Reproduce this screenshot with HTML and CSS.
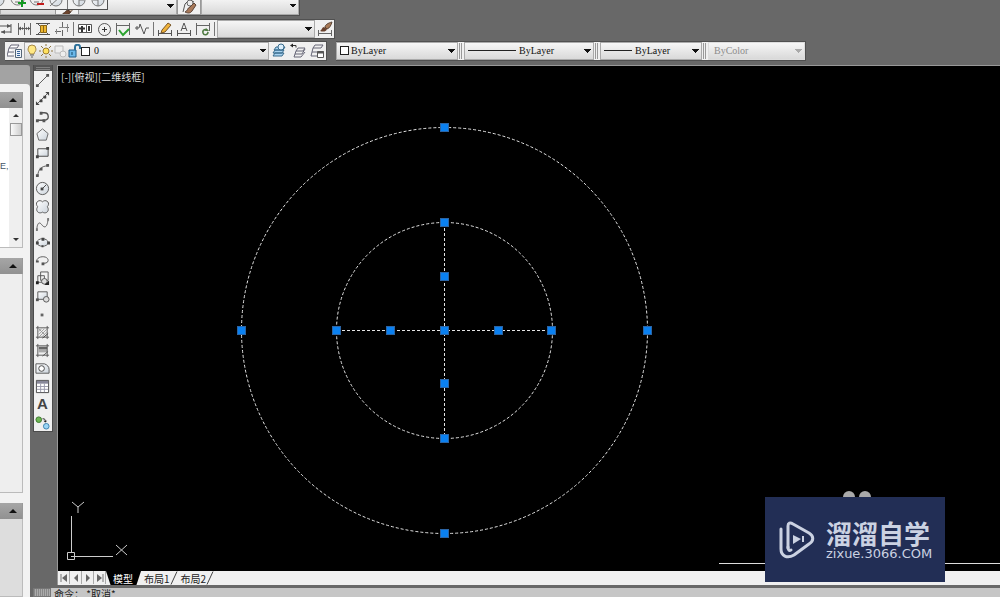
FILE: index.html
```html
<!DOCTYPE html>
<html lang="zh-CN">
<head>
<meta charset="utf-8">
<title>CAD</title>
<link rel="stylesheet" href="styles.css">
</head>
<body>
<svg class="defs" aria-hidden="true">
  <defs>
    <linearGradient id="fill" x1="0" y1="0" x2="1" y2="1"><stop offset="0" stop-color="#fff"/><stop offset="1" stop-color="#ccd4dc"/></linearGradient>
    <symbol id="brush" viewBox="0 0 16 16"><path d="M15 1C11 2 9 4 8 7l3 2c3-2 4-5 4-8z" fill="#d8c0a8" stroke="#5a4538"/><path d="M8 7c-3 0-3 3-6 4 3 2 7 2 9-2z" fill="#6b432c" stroke="#452e22"/></symbol>
  </defs>
</svg>

<header class="bars">
  <div class="bar bar-styles">
    <select class="combo styles-a" aria-label="文字样式"><option></option></select>
    <button class="tool" aria-label="标注样式"><svg viewBox="0 0 16 16"><path d="M2 14L4 6l4-4 5 2" fill="none" stroke="#555"/><circle cx="9" cy="5" r="3" fill="#eee" stroke="#666"/><path d="M13 5l2 2-4 6c-2 3-5 2-7 1 3-1 2-4 5-5z" fill="#a8795a" stroke="#5a4438"/></svg></button>
    <select class="combo styles-b" aria-label="标注样式列表"><option></option></select>
  </div>
  <div class="float-bar">
    <span class="brush-peek"><svg viewBox="0 0 16 16"><use href="#brush"/></svg></span>
    <div class="float-strip">
      <button class="tool" aria-label="视图"><svg viewBox="0 0 16 16"><circle cx="7" cy="8" r="6" fill="url(#fill)" stroke="#777"/></svg></button>
      <button class="tool" aria-label="并集"><svg viewBox="0 0 16 16"><path d="M1 6c0 9 12 9 13 2M5 10h5" fill="none" stroke="#777"/><path d="M12 8v7M8 11h8" stroke="#139a22" stroke-width="2"/></svg></button>
      <button class="tool" aria-label="差集"><svg viewBox="0 0 16 16"><path d="M1 6c0 9 12 9 13 2M5 10h5" fill="none" stroke="#777"/><path d="M8 12h7" stroke="#c21c1c" stroke-width="2"/></svg></button>
      <button class="tool" aria-label="交集"><svg viewBox="0 0 16 16"><circle cx="8" cy="8" r="6" fill="url(#fill)" stroke="#777"/><path d="M2 14L14 3" stroke="#777"/></svg></button>
      <span class="sep"></span>
      <button class="tool" aria-label="拉伸面"><svg viewBox="0 0 16 16"><circle cx="8" cy="8" r="6" fill="url(#fill)" stroke="#777"/><path d="M8 2v12M8 8h5" fill="none" stroke="#777"/></svg></button>
      <button class="tool" aria-label="移动面"><svg viewBox="0 0 16 16"><circle cx="8" cy="8" r="6" fill="url(#fill)" stroke="#777"/><path d="M8 2v12M3 8h5" fill="none" stroke="#777"/></svg></button>
    </div>
  </div>

  <div class="bar bar-dim">
    <button class="tool" aria-label="基线"><svg viewBox="0 0 16 16"><path d="M0 5h14M14 3v9M4 11h10" fill="none" stroke="#555"/><path d="M10 3l4 2-4 2M8 9l-4 2 4 2" fill="#555"/></svg></button>
    <button class="tool" aria-label="连续"><svg viewBox="0 0 16 16"><path d="M2.500 2v12M8.500 2v12M14.500 2v12M2 7.500h12" stroke="#666"/><path d="M2 7.500l3-2v4zM8 7.500L6 6v3zM9 7.500L11 6v3zM14 7.500l-2-2v4z" fill="#555"/></svg></button>
    <button class="tool" aria-label="标注间距"><svg viewBox="0 0 16 16"><path d="M1 2.500h14M1 13.500h14M2 2l3 3M14 2l-3 3M2 14l3-3M14 14l-3-3" stroke="#555"/><path d="M5.500 4.500h6v7h-6z" fill="#efb72e" stroke="#8b6818"/><path d="M8.500 5v6" stroke="#8b6818"/></svg></button>
    <button class="tool" aria-label="标注打断"><svg viewBox="0 0 16 16"><path d="M8.500 1v6M8.500 9v6M1 10.500h6M10 6.500h5" stroke="#666"/><path d="M13.500 3v8M2.500 8v5M5 6.500h7" stroke="#888"/></svg></button>
    <span class="sep"></span>
    <button class="tool" aria-label="公差"><svg viewBox="0 0 16 16"><path d="M1.500 3.500h13v8h-13zM9.500 4v8" fill="#fff" stroke="#555"/><path d="M2 7.500h6M5 5v6M12 5v5" stroke="#333" stroke-width="2"/></svg></button>
    <button class="tool" aria-label="圆心标记"><svg viewBox="0 0 16 16"><circle cx="8.500" cy="8.500" r="6" fill="none" stroke="#555"/><path d="M8.500 6v5M6 8.500h5" stroke="#333"/></svg></button>
    <button class="tool" aria-label="检验"><svg viewBox="0 0 16 16"><path d="M1.500 2v12M14.500 2v12M2 4.500h12" stroke="#666"/><path d="M4 9l4 5 6-6" fill="none" stroke="#2aa32f" stroke-width="2"/></svg></button>
    <button class="tool" aria-label="折弯线性"><svg viewBox="0 0 16 16"><path d="M1 7h4l1-4 4 10 2-6h3M3 5v4" fill="none" stroke="#555"/></svg></button>
    <span class="sep"></span>
    <button class="tool" aria-label="编辑标注"><svg viewBox="0 0 16 16"><path d="M1.500 9v6M14.500 9v6M2 12.500h12" stroke="#555"/><path d="M5 9l6-7 3 2-6 7-4 1z" fill="#efb23a" stroke="#775427"/></svg></button>
    <button class="tool" aria-label="编辑标注文字"><svg viewBox="0 0 16 16"><path d="M1.500 9v6M14.500 9v6M2 12.500h12M5 10l3-8 3 8M6 7.500h4" fill="none" stroke="#555"/></svg></button>
    <button class="tool" aria-label="标注更新"><svg viewBox="0 0 16 16"><path d="M1.500 2v12M14.500 2v8M2 4.500h12" stroke="#666"/><path d="M13 10c-2-3-6-1-5 2 1 3 5 2 5-1" fill="none" stroke="#4f7b42" stroke-width="1.500"/><path d="M11 7l3 3h-4z" fill="#4f7b42"/></svg></button>
    <span class="sep"></span>
    <select class="combo dim-style" aria-label="标注样式控制"><option></option></select>
    <button class="tool" aria-label="标注样式"><svg viewBox="0 0 16 16"><path d="M1.500 9v6M14.500 9v6M2 12.500h12" stroke="#666"/><path d="M15 1C11 2 8 4 8 6l2 2c3-1 4-4 5-7z" fill="#a87955" stroke="#5a4538"/><path d="M7 6c-2 0-2 3-4 4 3 1 6 1 7-2z" fill="#68402b"/></svg></button>
  </div>

  <div class="bar-row">
    <div class="bar bar-layer">
      <button class="tool" aria-label="图层特性"><svg viewBox="0 0 16 16"><path d="M2 5l2-3h8l-2 3zM2 5l-1 4h6M1 9l-1 4h7" fill="#fff" stroke="#667"/><path d="M8.500 6.500h6v8h-6z" fill="#edf3fa" stroke="#567"/><path d="M10 8.500h3M10 10.500h3M10 12.500h3" stroke="#37649b"/></svg></button>
      <div class="layer-box">
        <span class="layer-state" aria-hidden="true">
          <svg viewBox="0 0 14 14"><path d="M5 10C5 8 3 8 3 5a4 4 0 0 1 8 0c0 3-2 3-2 5z" fill="#ffe884" stroke="#a68a48"/><path d="M5 11h4M6 13h2" stroke="#666"/></svg>
          <svg viewBox="0 0 14 14"><circle cx="7" cy="7" r="3" fill="#ffe15e" stroke="#9b7b2d"/><path d="M7 0v2M7 12v2M0 7h2M12 7h2M2 2l2 2M10 10l2 2M2 12l2-2M10 4l2-2" stroke="#8f7740"/></svg>
          <svg viewBox="0 0 14 14"><path d="M2 2h8v7H2z" fill="#eee" stroke="#bbb"/><circle cx="10" cy="10" r="3" fill="#eee" stroke="#bbb"/></svg>
          <svg viewBox="0 0 14 14"><path d="M2 6h7v7H2z" fill="#6bb8ea" stroke="#225c87"/><path d="M8 6V3c0-3 5-3 5 0v2" fill="none" stroke="#2d7099" stroke-width="2"/><path d="M5 8v3" stroke="#174866"/></svg>
          <i class="swatch"></i>
        </span>
        <select class="combo layer" aria-label="图层"><option>0</option></select>
      </div>
      <button class="tool" aria-label="置为当前"><svg viewBox="0 0 16 16"><path d="M2 13l2-3h9l-2 3zM2 10l2-3h9l-2 3zM3 7l2-3h9l-2 3z" fill="#a9d3f0" stroke="#386a8b"/><circle cx="10" cy="4" r="3" fill="#dceffc" stroke="#386a8b"/></svg></button>
      <button class="tool" aria-label="上一个图层"><svg viewBox="0 0 16 16"><path d="M6 8l2-3h7l-2 3zM6 8l-1 3h7l3-5M5 11l-1 3h7l4-5" fill="none" stroke="#667"/><path d="M2 2.500h4v2" fill="none" stroke="#333"/><path d="M0 2.500l3-2v4z" fill="#222"/></svg></button>
      <button class="tool" aria-label="图层状态"><svg viewBox="0 0 16 16"><path d="M4 5l2-3h8l-2 3zM4 5L3 9h5M3 9l-1 4h6" fill="none" stroke="#667"/><path d="M8.500 8.500h6v6h-6z" fill="#fff" stroke="#555"/><path d="M8 9.500h7" stroke="#555" stroke-width="2"/></svg></button>
    </div>
    <div class="bar bar-props">
      <div class="prop prop-color"><i class="swatch" aria-hidden="true"></i><select class="combo" aria-label="颜色"><option>ByLayer</option></select></div>
      <span class="grip"></span>
      <div class="prop prop-type"><i class="rule rule-long" aria-hidden="true"></i><select class="combo" aria-label="线型"><option>ByLayer</option></select></div>
      <span class="grip"></span>
      <div class="prop prop-weight"><i class="rule" aria-hidden="true"></i><select class="combo" aria-label="线宽"><option>ByLayer</option></select></div>
      <span class="grip"></span>
      <div class="prop prop-plot"><select class="combo" aria-label="打印样式" disabled><option>ByColor</option></select></div>
    </div>
  </div>
</header>

<div class="main">
  <aside class="palette">
    <div class="palette-cap"></div>
    <div class="palette-body">
      <button class="section-head" aria-label="折叠"></button>
      <div class="section section-list">
        <p class="list-text">E,</p>
        <div class="scroll"><button class="scroll-up" aria-label="向上"></button><i class="thumb"></i><button class="scroll-down" aria-label="向下"></button></div>
      </div>
      <button class="section-head" aria-label="折叠"></button>
      <div class="section section-mid"></div>
      <button class="section-head" aria-label="折叠"></button>
      <div class="section section-end"></div>
    </div>
  </aside>

  <div class="work">
    <div class="stage">
      <nav class="draw-bar" aria-label="绘图">
        <span class="draw-grip"></span>
        <button aria-label="直线"><svg viewBox="0 0 16 16"><path d="M3 13L13 3" stroke="#555"/><path d="M1 12h3v3H1zM12 1h3v3h-3z" fill="#555"/></svg></button>
        <button aria-label="构造线"><svg viewBox="0 0 16 16"><path d="M2 14L14 2" stroke="#555"/><path d="M1 15v-4l4 4zM15 1v4l-4-4zM5 9h3v3H5zM9 5h3v3H9z" fill="#444"/></svg></button>
        <button aria-label="多段线"><svg viewBox="0 0 16 16"><path d="M3 12h7c6 0 5-8 0-8H7" fill="none" stroke="#555" stroke-width="1.500"/><path d="M1 11h3v3H1zM8 11h3v3H8zM5 3h3v3H5z" fill="#555"/></svg></button>
        <button aria-label="多边形"><svg viewBox="0 0 16 16"><path d="M8 2l6 5-2 7H4L2 7z" fill="url(#fill)" stroke="#666"/></svg></button>
        <button aria-label="矩形"><svg viewBox="0 0 16 16"><path d="M3 4h11v8H3z" fill="url(#fill)" stroke="#444"/><path d="M1 11h3v3H1zM12 2h3v3h-3z" fill="#444"/></svg></button>
        <button aria-label="圆弧"><svg viewBox="0 0 16 16"><path d="M3 14C3 7 7 3 14 3" fill="none" stroke="#555"/><path d="M1 12h3v3H1zM5 5h3v3H5zM12 1h3v3h-3z" fill="#555"/></svg></button>
        <button aria-label="圆"><svg viewBox="0 0 16 16"><circle cx="8" cy="8" r="6.500" fill="url(#fill)" stroke="#555"/><path d="M8 8l4-4" stroke="#444"/><path d="M6 7h3v3H6z" fill="#444"/></svg></button>
        <button aria-label="修订云线"><svg viewBox="0 0 16 16"><path d="M8 3c3-3 8 0 6 4-1 1-1 1 0 3 1 4-3 6-6 4-3 2-7 0-6-4 1-2 1-2 0-3C0 3 5 0 8 3z" fill="url(#fill)" stroke="#555"/></svg></button>
        <button aria-label="样条曲线"><svg viewBox="0 0 16 16"><path d="M2 14C2 8 4 4 7 8s6 4 7-6" fill="none" stroke="#555"/><path d="M1 12h2v3H1zM13 1h2v3h-2z" fill="#777"/></svg></button>
        <button aria-label="椭圆"><svg viewBox="0 0 16 16"><ellipse cx="8" cy="8" rx="6" ry="4" fill="url(#fill)" stroke="#555"/><path d="M1 7h3v3H1zM13 7h3v3h-3zM7 3h3v3H7zM7 11h2v2H7z" fill="#444"/></svg></button>
        <button aria-label="椭圆弧"><svg viewBox="0 0 16 16"><path d="M2 9C1 3 14 2 14 8c0 3-4 3-6 3" fill="none" stroke="#555"/><path d="M1 8h3v2H1zM7 10h3v3H7z" fill="#555"/></svg></button>
        <button aria-label="插入块"><svg viewBox="0 0 16 16"><path d="M6 1h8v9H6zM3 5h7v7H3z" fill="#f4f4f4" stroke="#555"/><circle cx="10" cy="11" r="3" fill="#ddd" stroke="#555"/><path d="M1 11h3v3H1zM15 10v5h-5z" fill="#222"/></svg></button>
        <button aria-label="创建块"><svg viewBox="0 0 16 16"><path d="M3 3h10v8H3z" fill="url(#fill)" stroke="#555"/><circle cx="12" cy="11" r="3" fill="#ddd" stroke="#555"/><path d="M1 10h3v3H1z" fill="#555"/></svg></button>
        <button aria-label="点"><svg viewBox="0 0 16 16"><path d="M6 7h3v3H6z" fill="#666"/></svg></button>
        <button aria-label="图案填充"><svg viewBox="0 0 16 16"><path d="M1 3h14M1 13h14M3 1v14M13 1v14" stroke="#555"/><path d="M4 7l3-3M4 10l6-6M4 13l9-9M7 13l6-6M4 4l9 9" stroke="#999"/><path d="M8 14l6-5" stroke="#444"/></svg></button>
        <button aria-label="渐变色"><svg viewBox="0 0 16 16"><path d="M4 4h9v3H4z" fill="#666"/><path d="M4 7h9v3H4z" fill="#aaa"/><path d="M1 3h14M1 13h14M3 1v14M13 1v14M8 14l6-5" stroke="#555"/></svg></button>
        <button aria-label="面域"><svg viewBox="0 0 16 16"><path d="M1 3h9c3 1 5 3 5 6v4H1z" fill="url(#fill)" stroke="#555"/><circle cx="7" cy="8" r="3" fill="#fff" stroke="#444"/></svg></button>
        <button aria-label="表格"><svg viewBox="0 0 16 16"><path d="M1.500 1.500h13v13h-13z" fill="#fff" stroke="#444"/><path d="M2 3.500h12" stroke="#889" stroke-width="3"/><path d="M2 8h12M2 11h12M6 5v9M10 5v9" stroke="#99a"/></svg></button>
        <button class="text-tool" aria-label="多行文字">A</button>
        <button aria-label="添加选定对象"><svg viewBox="0 0 16 16"><circle cx="4" cy="5" r="3" fill="#6db653" stroke="#39762b"/><circle cx="12" cy="12" r="3" fill="#9bd5f5" stroke="#397fac"/><path d="M8 4c3 0 3 1 3 3" fill="none" stroke="#222"/><path d="M9 6h4l-2 2z" fill="#222"/></svg></button>
      </nav>

      <section class="view">
        <div class="canvas">
          <svg class="drawing" aria-label="图形">
            <g fill="none" stroke="#e4e4e4" stroke-dasharray="3 2">
              <circle cx="386.500" cy="264.500" r="203"/>
              <circle cx="386.500" cy="264.500" r="108"/>
              <path d="M279 264.500h216M386.500 157v216"/>
            </g>
            <g fill="#0a80f0" stroke="#2b64a4">
              <rect x="382.500" y="57.500" width="8" height="8"/>
              <rect x="382.500" y="152.500" width="8" height="8"/>
              <rect x="382.500" y="206.500" width="8" height="8"/>
              <rect x="382.500" y="260.500" width="8" height="8"/>
              <rect x="382.500" y="313.500" width="8" height="8"/>
              <rect x="382.500" y="368.500" width="8" height="8"/>
              <rect x="382.500" y="463.500" width="8" height="8"/>
              <rect x="179.500" y="260.500" width="8" height="8"/>
              <rect x="274.500" y="260.500" width="8" height="8"/>
              <rect x="328.500" y="260.500" width="8" height="8"/>
              <rect x="436.500" y="260.500" width="8" height="8"/>
              <rect x="489.500" y="260.500" width="8" height="8"/>
              <rect x="585.500" y="260.500" width="8" height="8"/>
            </g>
            <path d="M661 497.500h2000" stroke="#ddd"/>
          </svg>
          <p class="view-label">[-][俯视][二维线框]</p>
          <svg class="ucs" viewBox="0 0 64 60" aria-label="坐标系"><path d="M6.500 14V50M6 54.500H48M2.500 50.500h7v7h-7zM7 0l6 5 6-5M13 5v6M51 43l11 10M62 43L51 53" fill="none" stroke="#ccc"/></svg>
        </div>
        <nav class="tabs" aria-label="布局">
          <button class="step" aria-label="第一个"><svg viewBox="0 0 10 10"><path d="M2 1v8" stroke="#777"/><path d="M8 1v8L3 5z" fill="#666"/></svg></button>
          <button class="step" aria-label="上一个"><svg viewBox="0 0 10 10"><path d="M7 1v8L3 5z" fill="#666"/></svg></button>
          <button class="step" aria-label="下一个"><svg viewBox="0 0 10 10"><path d="M3 1v8l4-4z" fill="#666"/></svg></button>
          <button class="step" aria-label="最后一个"><svg viewBox="0 0 10 10"><path d="M8 1v8" stroke="#777"/><path d="M2 1v8l5-4z" fill="#666"/></svg></button>
          <button class="tab tab-on">模型</button>
          <button class="tab">布局1</button><svg class="slash" viewBox="0 0 8 13"><path d="M1 13L7 0" stroke="#444"/></svg>
          <button class="tab">布局2</button><svg class="slash" viewBox="0 0 8 13"><path d="M1 13L7 0" stroke="#444"/></svg>
        </nav>
      </section>
    </div>
    <div class="command"><span class="command-grip"></span><p class="command-text">命令： *取消*</p></div>
  </div>
</div>

<div class="mark">
  <i class="ear ear-left"></i><i class="ear ear-right"></i>
  <svg class="mark-logo" viewBox="0 0 36 38"><g fill="none" stroke="#cbd2e2" stroke-linecap="round" stroke-linejoin="round"><path d="M9 27V5c0-3 2-4 5-2l16 9c5 3 5 8 0 11L15 34C8 38 2 35 2 28V8" stroke-width="3"/><path d="M9 26c0 3 1 4 3 3" stroke-width="3"/></g><path d="M14 14l8 4-8 5z" fill="#cbd2e2"/><path d="M24 15v6" stroke="#cbd2e2" stroke-width="2"/></svg>
  <div class="mark-words"><p class="mark-name">溜溜自学</p><p class="mark-site">zixue.3066.COM</p></div>
</div>
</body>
</html>
```

FILE: styles.css
```css
* { box-sizing: border-box; }
body {
  margin: 0;
  height: 100vh;
  display: flex;
  flex-direction: column;
  overflow: hidden;
  position: relative;
  background: #686868;
  font: 10px/12px "Liberation Sans", "Noto Sans CJK SC", sans-serif;
  color: #222;
}
p { margin: 0; }
i { display: block; }
button { border: 0; padding: 0; margin: 0; background: none; font: inherit; color: inherit; }
svg { display: block; }
.defs { position: absolute; width: 0; height: 0; }

/* toolbars */
.bars { flex: none; height: 65px; position: relative; display: flex; flex-direction: column; align-items: flex-start; }
.bar { display: flex; align-items: center; background: #f0f0f0; border: 1px solid #505050; border-left: 0; height: 20px; }
.tool { flex: none; width: 19px; height: 18px; display: flex; align-items: center; justify-content: center; }
.tool svg { width: 16px; height: 16px; }
.sep { flex: none; width: 1px; height: 14px; background: #777; margin: 0 1px 0 2px; }

.combo {
  --arrow: #111;
  appearance: none;
  height: 18px;
  margin: 0;
  padding: 0 4px;
  border: 1px solid #aaa;
  border-radius: 0;
  background:
    linear-gradient(to bottom right, var(--arrow) 50%, transparent 50%) right 1px center / 4px 4px no-repeat,
    linear-gradient(to bottom left, var(--arrow) 50%, transparent 50%) right 5px center / 4px 4px no-repeat,
    linear-gradient(#f6f6f6, #d9d9d9);
  font: 10px/16px "Liberation Serif", serif;
  color: #111;
}
.layer-box, .prop { position: relative; }
.bar-styles { height: 16px; border-top: 0; margin-bottom: 3px; align-items: flex-end; overflow: hidden; }
.styles-a { width: 177px; }
.styles-b { width: 98px; }
.bar-styles .tool { width: 24px; border: 1px solid #999; }
.float-bar { position: absolute; left: 0; top: 0; width: 108px; }
.float-strip { display: flex; align-items: flex-end; height: 10px; background: #f0f0f0; border-bottom: 1px solid #505050; border-right: 1px solid #505050; position: relative; overflow: hidden; }
.float-strip .tool:first-child { margin-left: -11px; }
.brush-peek { position: absolute; left: 55px; top: 0; width: 24px; height: 15px; background: #f2f2f2; border: 1px solid #999; padding: 3px 0 0 4px; overflow: hidden; }
.brush-peek svg { width: 16px; height: 14px; }

.bar-dim { margin-bottom: 2px; }
.bar-dim .tool:first-child { margin-left: -5px; }
.dim-style { width: 98px; margin-left: 1px; }

.bar-row { display: flex; align-items: center; padding-left: 5px; gap: 9px; }
.layer-box { width: 245px; }
.layer { width: 100%; padding-left: 69px; }
.layer-state { position: absolute; z-index: 1; left: 1px; top: 0; height: 18px; display: flex; align-items: center; pointer-events: none; }
.layer-state svg { width: 14px; height: 14px; }
.swatch { width: 9px; height: 9px; background: #fff; border: 1px solid #222; }

.grip { width: 3px; height: 16px; margin: 0 2px 0 1px; border-left: 1px solid #999; border-right: 1px solid #999; }
.prop .combo { width: 100%; }
.prop .swatch, .rule { position: absolute; left: 4px; top: 4px; pointer-events: none; }
.prop-color { width: 122px; }
.prop-color .combo { padding-left: 14px; }
.prop-type { width: 130px; }
.prop-type .combo { padding-left: 54px; }
.prop-weight { width: 102px; }
.prop-weight .combo { padding-left: 34px; }
.prop-plot { width: 97px; }
.prop-plot .combo { --arrow: #aaa; color: #8c8c8c; opacity: 1; padding-left: 5px; border-color: #ddd; }
.rule { width: 28px; height: 5px; border-bottom: 1px solid #222; }
.rule-long { width: 48px; }

/* side palette */
.main { flex: 1; min-height: 0; display: flex; }
.palette { flex: none; width: 30px; display: flex; flex-direction: column; background: #a3a3a3; border-radius: 0 3px 0 0; }
.palette-cap { height: 19px; }
.palette-body { flex: 1; min-height: 0; background: #f2f2f2; border-radius: 0 4px 0 0; padding: 8px 7px 0 0; display: flex; flex-direction: column; overflow: hidden; }
.section-head { flex: none; height: 16px; background: linear-gradient(#a6a6a6, #919191); border-right: 1px solid #999; display: flex; justify-content: center; align-items: center; padding-left: 4px; }
.section-head::before { content: ""; border: 4px solid transparent; border-top: 0; border-bottom: 4px solid #111; }
.section { border-right: 1px solid #bbb; border-bottom: 1px solid #bbb; margin-bottom: 10px; }
.section-list { flex: none; height: 140px; background: #fff; display: flex; overflow: hidden; }
.list-text { width: 9px; padding-top: 52px; color: #456; font-size: 9px; }
.scroll { width: 13px; background: #efefef; display: flex; flex-direction: column; align-items: center; }
.scroll-up, .scroll-down { height: 15px; display: flex; align-items: center; }
.scroll-up::before, .scroll-down::before { content: ""; border: 3px solid transparent; border-top: 0; border-bottom: 3px solid #333; }
.scroll-down { margin-top: auto; }
.scroll-down::before { border-bottom: 0; border-top: 3px solid #333; }
.thumb { width: 12px; height: 13px; border: 1px solid #999; background: linear-gradient(90deg, #fafafa, #cfcfcf); }
.section-mid { flex: none; height: 219px; background: #eee; }
.section-end { flex: 1; margin-bottom: 0; background: #ddd; }

/* drawing tools */
.work { flex: 1; min-width: 0; padding-left: 3px; display: flex; flex-direction: column; }
.stage { flex: 1; min-height: 0; display: flex; }
.draw-bar { flex: none; align-self: flex-start; width: 20px; margin-right: 4px; display: flex; flex-direction: column; background: #f0f0f0; border: 1px solid #4c4c4c; border-top: 0; }
.draw-grip { height: 6px; border: solid #555; border-width: 1px 2px; background: repeating-linear-gradient(#555 0 1px, #808080 1px 2px); }
.draw-bar button { height: 18px; display: flex; align-items: center; justify-content: flex-start; padding-left: 1px; }
.draw-bar svg { width: 15px; height: 15px; }
.draw-bar .text-tool { padding-left: 3px; font: bold 15px/18px "Liberation Sans", sans-serif; color: #444; }

/* viewport */
.view { flex: 1; min-width: 0; display: flex; flex-direction: column; border-left: 1px solid #999; border-top: 1px solid #999; }
.canvas { flex: 1; min-height: 0; position: relative; background: #000; }
.drawing { position: absolute; inset: 0; width: 100%; height: 100%; }
.view-label { position: absolute; left: 3px; top: 5px; color: #ddd; font: 10px/12px "Noto Sans CJK SC", sans-serif; }
.ucs { position: absolute; left: 7px; bottom: 9px; width: 64px; height: 60px; overflow: visible; }
.tabs { flex: none; height: 14px; display: flex; background: #f0f0f0; }
.step { width: 12px; height: 13px; display: flex; align-items: center; justify-content: center; border-right: 1px solid #aaa; }
.step svg { width: 10px; height: 10px; }
.tab { padding: 0 0 0 3px; font: 10px/13px "Noto Sans CJK SC", sans-serif; }
.tab-on { padding: 0 8px 0 7px; background: #000; color: #fff; clip-path: polygon(0 0, 100% 0, 87% 100%, 13% 100%); }
.slash { width: 8px; height: 14px; }

.command { flex: none; height: 9px; margin-top: 3px; display: flex; background: #c6c6c6; overflow: hidden; }
.command-grip { width: 18px; border: 1px solid #777; background: repeating-linear-gradient(90deg, #888 0 1px, #aaa 1px 2px); }
.command-text { padding-left: 3px; font: 10px/12px "Noto Sans CJK SC", sans-serif; }

/* corner watermark */
.mark { position: absolute; right: 55px; bottom: 15px; width: 180px; height: 85px; padding-left: 14px; display: flex; align-items: center; gap: 11px; background: #222e55; color: #cbd2e2; }
.mark-logo { flex: none; width: 36px; height: 38px; }
.mark-name { font: bold 26px/28px "Noto Sans CJK SC", sans-serif; }
.mark-site { font: 13px/14px "DejaVu Sans", sans-serif; }
.ear { position: absolute; top: -6px; width: 12px; height: 6px; border-radius: 6px 6px 0 0; background: #aaa; }
.ear-left { left: 78px; }
.ear-right { left: 94px; }
```
